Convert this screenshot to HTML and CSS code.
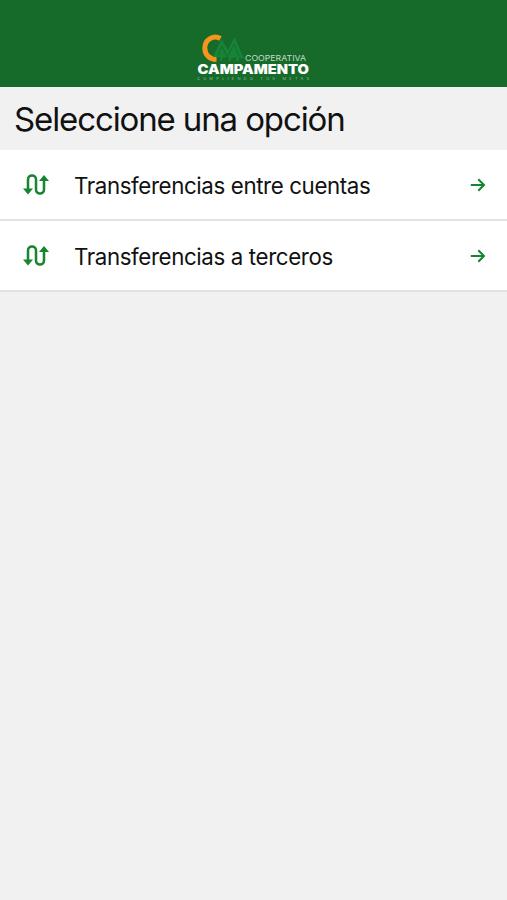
FILE: index.html
```html
<!DOCTYPE html>
<html lang="es">
<head>
<meta charset="utf-8">
<title>Transferencias</title>
<link rel="stylesheet" href="styles.css">
</head>
<body>
<header class="header">
  <svg class="logo" width="125" height="54" viewBox="190 30 125 54" role="img" aria-label="Cooperativa Campamento">
    <path class="logo-c" d="M220.500 38.500C213.500 34.500 204.800 39.500 204.800 48C204.800 55 210 59.500 216.500 59.500"/>
    <path class="logo-tree" d="M213 57L221.500 39L228 50L234.500 37L244 59L239 57.500V61H236V57.500L231 58.500V61H228.500V57L222.500 58V61H220V57Z"/>
    <path class="logo-vein" d="M218 55L222 46L227 57L234 44L239 56"/>
    <text class="logo-small" x="245" y="61" textLength="61" lengthAdjust="spacingAndGlyphs">COOPERATIVA</text>
    <text class="logo-name" x="197.500" y="73.700" textLength="111.500" lengthAdjust="spacingAndGlyphs">CAMPAMENTO</text>
    <text class="logo-tag" x="197" y="79.500" textLength="112">CUMPLIENDO TUS METAS</text>
  </svg>
</header>
<main>
  <h1 class="title"><span>Seleccione una opción</span></h1>
  <nav class="options">
    <a class="option">
      <svg class="route" width="28" height="24" viewBox="0 0 28 24"><path class="line" d="M6 18V6.500C6 1.200 14 1.200 14 6.500V16.500C14 21.800 22 21.800 22 16.500V6"/><path class="tip" d="M1 15.500H11L6 21.500ZM17 8H27L22 2Z"/></svg>
      <span class="label">Transferencias entre cuentas</span>
      <svg class="arrow" width="16" height="16" viewBox="0 0 16 16"><path class="line" d="M.8 8H14M8.300 2.200L14 8L8.300 13.800"/></svg>
    </a>
    <a class="option">
      <svg class="route" width="28" height="24" viewBox="0 0 28 24"><path class="line" d="M6 18V6.500C6 1.200 14 1.200 14 6.500V16.500C14 21.800 22 21.800 22 16.500V6"/><path class="tip" d="M1 15.500H11L6 21.500ZM17 8H27L22 2Z"/></svg>
      <span class="label">Transferencias a terceros</span>
      <svg class="arrow" width="16" height="16" viewBox="0 0 16 16"><path class="line" d="M.8 8H14M8.300 2.200L14 8L8.300 13.800"/></svg>
    </a>
  </nav>
</main>
</body>
</html>
```
FILE: styles.css
```css
* { box-sizing: border-box; }
body {
  margin: 0;
  min-height: 100vh;
  background: #f1f1f1;
  color: #111;
  font-family: Inter, "Liberation Sans", sans-serif;
}
.header {
  height: 87px;
  padding-top: 30px;
  padding-left: 190px;
  background: #166b2b;
}
.logo { display: block; font-family: Inter, sans-serif; }
.logo-c { fill: none; stroke: #f7941d; stroke-width: 5; }
.logo-tree { fill: #168338; }
.logo-vein { fill: none; stroke: #166b2b; stroke-width: 1; }
.logo-small { fill: #c3dbc8; font-size: 8px; }
.logo-name { fill: #fff; font-size: 12.5px; font-weight: 900; }
.logo-tag { fill: #8ab893; font-size: 4px; }
.title {
  display: flex;
  align-items: center;
  height: 63px;
  margin: 0;
  padding: 0 0 0 14px;
  font-size: 33px;
  font-weight: 400;
  letter-spacing: -1.12px;
  white-space: nowrap;
}
.option {
  display: flex;
  align-items: center;
  height: 71px;
  padding: 0 21px 0 22px;
  background: #fff;
  border-bottom: 2px solid #e2e2e2;
}
.label {
  flex: 1;
  margin-left: 24px;
  padding-top: 1px;
  font-size: 22.3px;
  letter-spacing: -0.38px;
  white-space: nowrap;
}
.line { fill: none; stroke: #15852f; stroke-width: 2.5; }
.arrow .line { stroke-width: 2; }
.tip { fill: #15852f; }
```
